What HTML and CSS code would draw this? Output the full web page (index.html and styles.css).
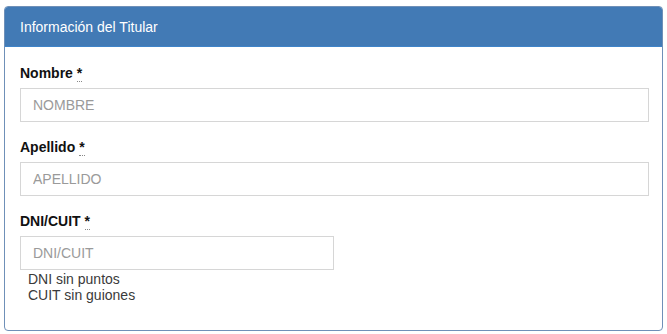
FILE: index.html
```html
<!DOCTYPE html>
<html lang="es">
<head>
<meta charset="utf-8">
<title>Información del Titular</title>
<link rel="stylesheet" href="styles.css">
</head>
<body>
<div class="panel">
  <div class="panel-heading">Información del Titular</div>
  <div class="panel-body">
    <div class="form-group">
      <label class="label">Nombre <abbr title="requerido">*</abbr></label>
      <input class="input" type="text" placeholder="NOMBRE">
    </div>
    <div class="form-group">
      <label class="label">Apellido <abbr title="requerido">*</abbr></label>
      <input class="input" type="text" placeholder="APELLIDO">
    </div>
    <div class="form-group last">
      <label class="label">DNI/CUIT <abbr title="requerido">*</abbr></label>
      <input class="input half" type="text" placeholder="DNI/CUIT">
      <div class="help">DNI sin puntos<br>CUIT sin guiones</div>
    </div>
  </div>
</div>
</body>
</html>
```
FILE: styles.css
```css
html, body {
  margin: 0;
  padding: 0;
  background: #ffffff;
}
body {
  padding: 6px 0 0 4px;
  font-family: "Liberation Sans", Arial, Helvetica, sans-serif;
  font-size: 14px;
  color: #111;
}
.panel {
  box-sizing: border-box;
  width: 659px;
  height: 325px;
  border: 1px solid #6f90b8;
  border-radius: 4px;
  background: #fff;
  overflow: hidden;
}
.panel-heading {
  box-sizing: border-box;
  height: 40px;
  padding: 0 15px;
  display: flex;
  align-items: center;
  background: #427ab5;
  border-bottom: 1px solid #3f84c9;
  color: #fff;
  font-size: 14px;
  line-height: 20px;
}
.panel-body {
  padding: 16px 13px 0 15px;
}
.form-group {
  display: flex;
  flex-direction: column;
  margin-bottom: 15px;
}
.form-group.last {
  margin-bottom: 0;
}
.label {
  font-weight: bold;
  font-size: 14px;
  line-height: 20px;
  margin-bottom: 5px;
  color: #111;
}
.label abbr {
  text-decoration: none;
  border-bottom: 1px dotted #888;
  cursor: help;
}
.input {
  box-sizing: border-box;
  width: 100%;
  height: 34px;
  padding: 0 12px;
  border: 1px solid #d6d6d6;
  border-radius: 0;
  background: #fff;
  font-family: "Liberation Sans", Arial, Helvetica, sans-serif;
  font-size: 14px;
  color: #333;
  outline: none;
}
.input::placeholder {
  color: #9a9a9a;
}
.input.half {
  width: 314px;
}
.help {
  margin-top: 1px;
  padding-left: 8px;
  font-size: 14px;
  line-height: 16px;
  color: #3a3a3a;
}
```
